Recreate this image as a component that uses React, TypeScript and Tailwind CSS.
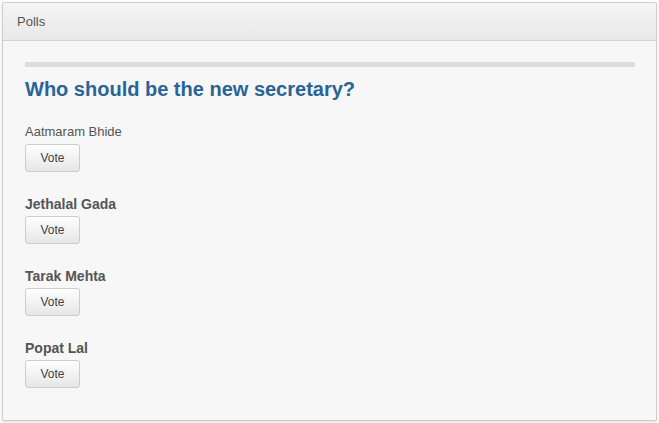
import React from "react";

const candidates = [
  { name: "Aatmaram Bhide", bold: false },
  { name: "Jethalal Gada", bold: true },
  { name: "Tarak Mehta", bold: true },
  { name: "Popat Lal", bold: true },
];

export default function App() {
  return (
    <div className="w-[659px] h-[423px] bg-[#fbfbfb] p-[2px] font-['Liberation_Sans',Arial,sans-serif]">
      <div className="h-[419px] flex flex-col border border-[#cfcfcf] rounded-[2px] bg-[#f7f7f7] shadow-[0_1px_2px_rgba(0,0,0,0.12)] overflow-hidden">
        {/* Panel header */}
        <div className="h-[38px] shrink-0 flex items-center px-[14px] bg-gradient-to-b from-[#f5f5f5] to-[#e8e8e8] border-b border-[#d2d2d2]">
          <span className="text-[13px] text-[#555]">Polls</span>
        </div>

        {/* Panel body */}
        <div className="pt-[21px] pl-[22px] pr-[21px]">
          <div className="h-[5px] bg-[#dddddd]"></div>
          <h2 className="mt-[10px] text-[20px] leading-[24px] font-bold text-[#2a6496]">
            Who should be the new secretary?
          </h2>

          <div className="mt-[21px] flex flex-col">
            {candidates.map((c) => (
              <div key={c.name} className="h-[72px]">
                <div
                  className={`leading-[20px] text-[#555] ${c.bold ? "text-[14px] font-bold" : "text-[13px]"}`}
                >
                  {c.name}
                </div>
                <button className="mt-[2px] w-[55px] h-[28px] rounded-[3px] border border-[#cccccc] bg-gradient-to-b from-white to-[#e6e6e6] text-[12px] text-[#444] shadow-[inset_0_1px_0_rgba(255,255,255,0.6)]">
                  Vote
                </button>
              </div>
            ))}
          </div>
        </div>
      </div>
    </div>
  );
}
